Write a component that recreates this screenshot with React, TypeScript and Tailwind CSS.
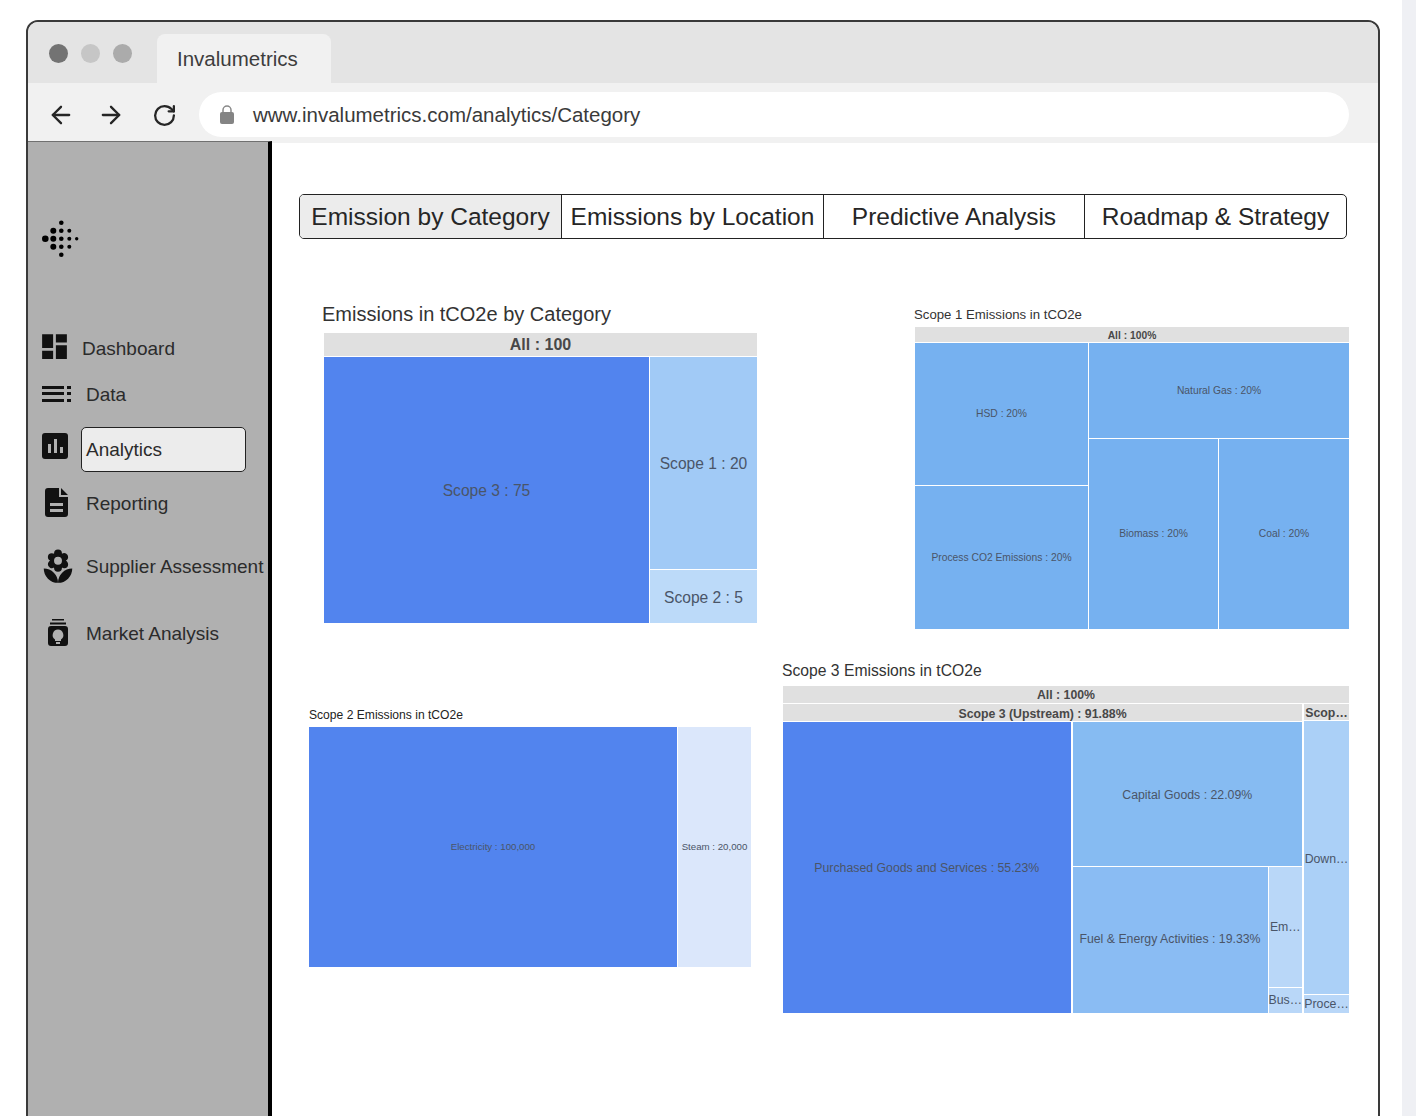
import React from 'react';
import { MdDashboard, MdLocalFlorist } from 'react-icons/md';
import { ArrowLeft, ArrowRight, RotateCw } from 'lucide-react';

const Logo = () => {
  const dots = [
    [19.3, 2.7, 2.3],
    [11.3, 10.7, 3], [19.3, 10.7, 2.3], [27.3, 10.7, 2],
    [3.3, 18.7, 3.3], [11.3, 18.7, 3], [19.3, 18.7, 2.3], [27.3, 18.7, 2], [34.7, 18.7, 1.7],
    [11.3, 26.7, 3], [19.3, 26.7, 2.3], [27.3, 26.7, 2],
    [19.3, 34.7, 2.3],
  ];
  return (
    <svg width="38" height="38" viewBox="0 0 38 38" className="block">
      {dots.map(([x, y, r], i) => (
        <circle key={i} cx={x} cy={y} r={r} fill="#000" />
      ))}
    </svg>
  );
};

const DataIcon = () => (
  <svg width="29" height="16" viewBox="0 0 29 16" className="block">
    <rect x="0" y="0" width="22" height="3" fill="#111" />
    <rect x="0" y="6" width="22" height="3" fill="#111" />
    <rect x="0" y="13" width="22" height="3" fill="#111" />
    <rect x="25" y="0" width="4" height="3" fill="#111" />
    <rect x="25" y="6" width="4" height="3" fill="#111" />
    <rect x="25" y="13" width="4" height="3" fill="#111" />
  </svg>
);

const AnalyticsIcon = () => (
  <svg width="26" height="26" viewBox="0 0 26 26" className="block">
    <rect width="26" height="26" rx="3" fill="#111" />
    <rect x="6" y="11" width="3" height="9" fill="#b0b0b0" />
    <rect x="12" y="6" width="3" height="14" fill="#b0b0b0" />
    <rect x="18" y="14" width="3" height="6" fill="#b0b0b0" />
  </svg>
);

const ReportIcon = () => (
  <svg width="23" height="29" viewBox="0 0 23 29" className="block -mt-[2px]">
    <path
      fillRule="evenodd"
      fill="#111"
      d="M3 0H14V9H23V26A3 3 0 0 1 20 29H3A3 3 0 0 1 0 26V3A3 3 0 0 1 3 0ZM16 0L23 7H16ZM5 15V18H18V15ZM5 21V24H18V21Z"
    />
  </svg>
);

const MarketIcon = () => (
  <svg width="20" height="27" viewBox="0 0 20 27" className="block -mt-[2px]">
    <rect x="4" y="0" width="12" height="1.5" fill="#111" />
    <rect x="2" y="3.5" width="16" height="2" fill="#111" />
    <path
      fillRule="evenodd"
      fill="#111"
      d="M3 7H17A3 3 0 0 1 20 10V24A3 3 0 0 1 17 27H3A3 3 0 0 1 0 24V10A3 3 0 0 1 3 7ZM10 10.5A5.5 5.5 0 0 0 7 20.5V22H13V20.5A5.5 5.5 0 0 0 10 10.5ZM8 23V25H12V23Z"
    />
  </svg>
);

// single treemap cell
const Tile = ({ label, className, textClass }: { label: string; className: string; textClass?: string }) => (
  <div className={`flex items-center justify-center overflow-hidden whitespace-nowrap text-[#4a5568] ${textClass ?? ''} ${className}`}>
    {label}
  </div>
);

const NavItem = ({
  icon,
  label,
  iconWidth,
  className,
}: {
  icon: React.ReactNode;
  label: string;
  iconWidth: string;
  className: string;
}) => (
  <div className={`flex items-center ${className}`}>
    <div className={`flex justify-center shrink-0 ${iconWidth}`}>{icon}</div>
    <span className="whitespace-nowrap text-[19px] pt-[2px]">{label}</span>
  </div>
);

const App = () => {
  return (
    <div className="w-[1416px] h-[1116px] bg-white overflow-hidden flex font-['Liberation_Sans',Arial,sans-serif] text-[#2b2b2b]">
      <div className="ml-[26px] mt-[20px] w-[1354px] h-[1200px] shrink-0 border-2 border-[#3a3a3a] rounded-[12px] overflow-hidden flex flex-col">
        {/* title bar */}
        <div className="h-[61px] bg-[#e4e4e4] flex shrink-0">
          <div className="flex gap-[13px] pl-[21px] pt-[22px]">
            <div className="w-[19px] h-[19px] rounded-full bg-[#737373]" />
            <div className="w-[19px] h-[19px] rounded-full bg-[#c6c6c6]" />
            <div className="w-[19px] h-[19px] rounded-full bg-[#ababab]" />
          </div>
          <div className="ml-[25px] mt-[12px] w-[174px] h-[49px] bg-[#f1f1f1] rounded-t-[8px] pl-[20px] pt-[13px] text-[20.5px] leading-[24px] text-[#3d3d3d]">
            Invalumetrics
          </div>
        </div>

        {/* address bar */}
        <div className="h-[58px] bg-[#f1f1f1] flex items-start shrink-0">
          <div className="flex items-center h-[64px] text-[#262626] w-[171px] shrink-0">
            <ArrowLeft size={28} strokeWidth={2} className="ml-[19px]" />
            <ArrowRight size={28} strokeWidth={2} className="ml-[22px]" />
            <RotateCw size={25} strokeWidth={2.2} className="ml-[27px]" />
          </div>
          <div className="mt-[9px] w-[1150px] h-[45px] bg-white rounded-full flex items-center pl-[20px] shrink-0">
            <svg width="16" height="19" viewBox="0 0 16 19" className="block">
              <path d="M4 8V5a4 4 0 0 1 8 0v3" fill="none" stroke="#888" strokeWidth="1.5" />
              <rect x="1" y="7" width="14" height="12" rx="2" fill="#848484" />
            </svg>
            <span className="ml-[18px] pt-[2px] text-[20.5px] text-[#3a3a3a]">www.invalumetrics.com/analytics/Category</span>
          </div>
        </div>

        <div className="flex flex-1 min-h-0">
          {/* sidebar */}
          <div className="w-[244px] shrink-0 bg-[#b0b0b0] border-t border-t-[#707070] border-r-4 border-r-black">
            <div className="pl-[14px] pt-[78px]">
              <Logo />
            </div>
            <div className="mt-[76px] pl-[14px]">
              <NavItem
                icon={<MdDashboard size={33} color="#111" className="shrink-0 -mt-[4px]" />}
                label="Dashboard"
                iconWidth="w-[25px]"
                className="h-[28px] gap-[15px]"
              />
              <NavItem icon={<DataIcon />} label="Data" iconWidth="w-[29px]" className="mt-[18px] h-[28px] gap-[15px]" />
              <div className="mt-[19px] flex items-start">
                <div className="mt-[6px] w-[26px] shrink-0">
                  <AnalyticsIcon />
                </div>
                <div className="ml-[13px] w-[165px] h-[45px] rounded-[5px] border border-[#222] bg-[#ececec] pl-[4px] pt-[2px] flex items-center text-[19px]">
                  Analytics
                </div>
              </div>
              <NavItem icon={<ReportIcon />} label="Reporting" iconWidth="w-[29px]" className="mt-[16px] h-[30px] gap-[15px]" />
              <NavItem icon={<MdLocalFlorist size={38} color="#111" className="shrink-0 mt-[2px]" />} label="Supplier Assessment" iconWidth="w-[31px]" className="mt-[31px] h-[34px] gap-[13px]" />
              <NavItem icon={<MarketIcon />} label="Market Analysis" iconWidth="w-[31px]" className="mt-[36px] h-[28px] gap-[13px]" />
            </div>
          </div>

          {/* main panel */}
          <div className="flex-1 min-w-0 border-t-2 border-t-[#f1f1f1] pl-[27px] pt-[51px]">
            <div className="flex w-[1048px] h-[45px] rounded-[5px] border border-[#222] overflow-hidden text-[24.5px] text-[#262626]">
              <div className="w-[262px] pt-[2px] bg-[#ececec] flex items-center justify-center whitespace-nowrap border-r border-[#222]">Emission by Category</div>
              <div className="w-[262px] pt-[2px] flex items-center justify-center whitespace-nowrap border-r border-[#222]">Emissions by Location</div>
              <div className="w-[261px] pt-[2px] flex items-center justify-center whitespace-nowrap border-r border-[#222]">Predictive Analysis</div>
              <div className="flex-1 pt-[2px] flex items-center justify-center whitespace-nowrap">Roadmap &amp; Strategy</div>
            </div>

            {/* top row */}
            <div className="flex items-start mt-[63px]">
              <div className="ml-[23px] w-[435px]">
                <div className="text-[20px] leading-[24px] text-[#333]">Emissions in tCO2e by Category</div>
                <div className="mt-[7px] ml-[2px] w-[433px]">
                  <Tile label="All : 100" className="h-[23px] bg-[#e0e0e0]" textClass="text-[16px] font-bold !text-[#484848]" />
                  <div className="flex mt-px h-[266px] gap-px text-[15.6px]">
                    <Tile label="Scope 3 : 75" className="w-[325px] pt-[2px] bg-[#5284ee]" />
                    <div className="flex-1 flex flex-col gap-px">
                      <Tile label="Scope 1 : 20" className="h-[212px] pt-[2px] bg-[#a1caf6]" />
                      <Tile label="Scope 2 : 5" className="flex-1 pt-[2px] bg-[#bcdaf9]" />
                    </div>
                  </div>
                </div>
              </div>

              <div className="ml-[157px] w-[435px] pt-[5px]">
                <div className="text-[13.2px] leading-[16px] text-[#333]">Scope 1 Emissions in tCO2e</div>
                <div className="mt-[4px] ml-[1px] w-[434px] text-[10.3px]">
                  <Tile label="All : 100%" className="h-[15px] pt-[2px] bg-[#e0e0e0]" textClass="font-bold !text-[#484848]" />
                  <div className="flex mt-px h-[286px] gap-px">
                    <div className="w-[173px] flex flex-col gap-px">
                      <Tile label="HSD : 20%" className="h-[142px] bg-[#76b1f0]" />
                      <Tile label="Process CO2 Emissions : 20%" className="flex-1 bg-[#76b1f0]" />
                    </div>
                    <div className="flex-1 flex flex-col gap-px">
                      <Tile label="Natural Gas : 20%" className="h-[95px] bg-[#76b1f0]" />
                      <div className="flex flex-1 gap-px">
                        <Tile label="Biomass : 20%" className="w-[129px] bg-[#76b1f0]" />
                        <Tile label="Coal : 20%" className="flex-1 bg-[#76b1f0]" />
                      </div>
                    </div>
                  </div>
                </div>
              </div>
            </div>

            {/* bottom row */}
            <div className="flex items-start mt-[33px]">
              <div className="ml-[10px] w-[442px] mt-[46px]">
                <div className="text-[12.1px] leading-[15px] text-[#222]">Scope 2 Emissions in tCO2e</div>
                <div className="mt-[4px] flex h-[240px] gap-px text-[9.7px]">
                  <Tile label="Electricity : 100,000" className="w-[368px] bg-[#5284ee]" />
                  <Tile label="Steam : 20,000" className="flex-1 bg-[#dbe7fb]" />
                </div>
              </div>

              <div className="ml-[31px] w-[567px]">
                <div className="text-[15.7px] leading-[18px] text-[#333]">Scope 3 Emissions in tCO2e</div>
                <div className="mt-[6px] ml-[1px] w-[566px] text-[12.3px]">
                  <Tile label="All : 100%" className="h-[17px] pt-[2px] bg-[#e0e0e0]" textClass="font-bold !text-[#484848]" />
                  <div className="flex mt-px h-[309px] gap-[2px]">
                    <div className="w-[519px] flex flex-col">
                      <Tile label="Scope 3 (Upstream) : 91.88%" className="h-[17px] pt-[3px] bg-[#e0e0e0]" textClass="font-bold !text-[#484848]" />
                      <div className="flex flex-1 mt-px gap-[2px]">
                        <Tile label="Purchased Goods and Services : 55.23%" className="w-[288px] pt-[2px] bg-[#5284ee]" />
                        <div className="flex-1 flex flex-col gap-px">
                          <Tile label="Capital Goods : 22.09%" className="h-[144px] pt-[2px] bg-[#86bbf2]" />
                          <div className="flex flex-1 gap-px">
                            <Tile label="Fuel & Energy Activities : 19.33%" className="w-[195px] pb-[2px] bg-[#8abcf3]" />
                            <div className="flex-1 flex flex-col gap-px">
                              <Tile label="Em…" className="h-[120px] bg-[#b9d7f8]" />
                              <Tile label="Bus…" className="flex-1 bg-[#b9d7f8]" />
                            </div>
                          </div>
                        </div>
                      </div>
                    </div>
                    <div className="flex-1 flex flex-col">
                      <Tile label="Scop…" className="h-[17px] pt-[3px] bg-[#e0e0e0]" textClass="font-bold !text-[#484848]" />
                      <div className="flex flex-1 flex-col mt-px gap-px">
                        <Tile label="Down…" className="h-[273px] pt-[4px] bg-[#abd0f7]" />
                        <Tile label="Proce…" className="flex-1 bg-[#b9d7f8]" />
                      </div>
                    </div>
                  </div>
                </div>
              </div>
            </div>
          </div>
        </div>
      </div>
      <div className="ml-[22px] w-[14px] h-full bg-[#eff0f4] shrink-0" />
    </div>
  );
};

export default App;
